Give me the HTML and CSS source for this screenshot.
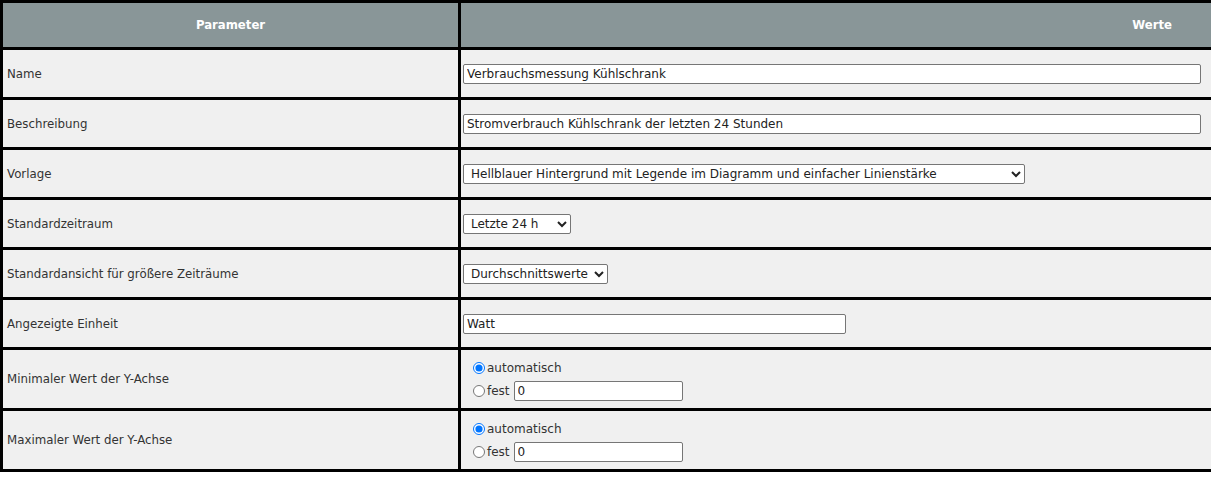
FILE: index.html
```html
<!DOCTYPE html>
<html lang="de">
<head>
<meta charset="utf-8">
<title>Parameter</title>
<link rel="stylesheet" href="styles.css">
</head>
<body>
<table class="params">
  <thead>
    <tr>
      <th class="col-param">Parameter</th>
      <th class="col-value">Werte</th>
    </tr>
  </thead>
  <tbody>
    <tr>
      <td class="label">Name</td>
      <td class="value"><input class="field field-wide" type="text" value="Verbrauchsmessung Kühlschrank"></td>
    </tr>
    <tr>
      <td class="label">Beschreibung</td>
      <td class="value"><input class="field field-wide" type="text" value="Stromverbrauch Kühlschrank der letzten 24 Stunden"></td>
    </tr>
    <tr>
      <td class="label">Vorlage</td>
      <td class="value">
        <select class="field select-template">
          <option>Hellblauer Hintergrund mit Legende im Diagramm und einfacher Linienstärke</option>
        </select>
      </td>
    </tr>
    <tr>
      <td class="label">Standardzeitraum</td>
      <td class="value">
        <select class="field select-period">
          <option>Letzte 24 h</option>
        </select>
      </td>
    </tr>
    <tr>
      <td class="label">Standardansicht für größere Zeiträume</td>
      <td class="value">
        <select class="field select-view">
          <option>Durchschnittswerte</option>
        </select>
      </td>
    </tr>
    <tr>
      <td class="label">Angezeigte Einheit</td>
      <td class="value"><input class="field field-unit" type="text" value="Watt"></td>
    </tr>
    <tr class="radio-row">
      <td class="label">Minimaler Wert der Y-Achse</td>
      <td class="value">
        <div class="radio-group">
          <label class="radio-line"><input type="radio" name="ymin" checked><span>automatisch</span></label>
          <label class="radio-line"><input type="radio" name="ymin"><span>fest</span><input class="field field-fixed" type="text" value="0"></label>
        </div>
      </td>
    </tr>
    <tr class="radio-row">
      <td class="label">Maximaler Wert der Y-Achse</td>
      <td class="value">
        <div class="radio-group">
          <label class="radio-line"><input type="radio" name="ymax" checked><span>automatisch</span></label>
          <label class="radio-line"><input type="radio" name="ymax"><span>fest</span><input class="field field-fixed" type="text" value="0"></label>
        </div>
      </td>
    </tr>
  </tbody>
</table>
</body>
</html>
```

FILE: styles.css
```css
html, body {
  margin: 0;
  padding: 0;
  background: #ffffff;
}

body {
  font-family: "DejaVu Sans", Verdana, sans-serif;
  font-size: 11.8px;
  color: #333333;
  overflow: hidden;
}

.params {
  border-collapse: collapse;
  width: 100%;
  background: #f0f0f0;
}

.params th,
.params td {
  border: 3px solid #000000;
}

.params th:last-child,
.params td:last-child {
  border-right: none;
}

.params th {
  background: #899698;
  color: #ffffff;
  font-weight: bold;
  font-size: 11.7px;
  height: 44px;
  padding: 0;
}

.col-param {
  width: 455px;
  text-align: center;
}

.col-value {
  text-align: right;
  padding-right: 39px !important;
}

.label {
  padding: 0 4px;
  height: 47px;
  vertical-align: middle;
}

.value {
  padding: 0 2px;
  vertical-align: middle;
}

.field {
  box-sizing: border-box;
  height: 20px;
  margin: 0;
  font-family: inherit;
  font-size: 12px;
  color: #222222;
  background: #ffffff;
  border: 1px solid #767676;
  border-radius: 2px;
  padding: 0 3px;
}

.field-wide {
  width: 738px;
  display: block;
}

.select-template {
  width: 562px;
}

.select-period {
  width: 108px;
}

.field-unit {
  width: 383px;
  display: block;
}

.radio-row .label,
.radio-row .value {
  height: 58px;
}

.radio-group {
  display: flex;
  flex-direction: column;
  gap: 3px;
  padding-left: 10px;
  font-size: 12px;
}

.radio-line {
  display: flex;
  align-items: center;
  gap: 2px;
  height: 20px;
}

.radio-line input[type="radio"] {
  margin: 0;
  width: 12px;
  height: 12px;
}

.field-fixed {
  width: 169px;
  margin-left: 2px;
}
```
